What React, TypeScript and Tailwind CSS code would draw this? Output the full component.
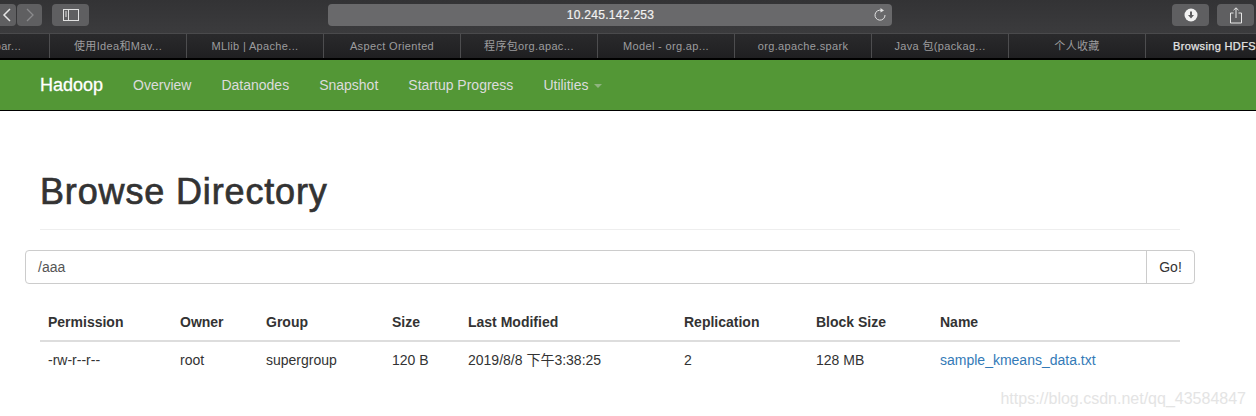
const tabs = [
  "Apache: Spar...",
  "使用Idea和Mav...",
  "MLlib | Apache...",
  "Aspect Oriented",
  "程序包org.apac...",
  "Model - org.ap...",
  "org.apache.spark",
  "Java 包(packag...",
  "个人收藏",
];

const navLinks = ["Overview", "Datanodes", "Snapshot", "Startup Progress"];

const columns = [
  { label: "Permission", value: "-rw-r--r--", width: "w-[132px]" },
  { label: "Owner", value: "root", width: "w-[86px]" },
  { label: "Group", value: "supergroup", width: "w-[126px]" },
  { label: "Size", value: "120 B", width: "w-[76px]" },
  { label: "Last Modified", value: "2019/8/8 下午3:38:25", width: "w-[216px]" },
  { label: "Replication", value: "2", width: "w-[132px]" },
  { label: "Block Size", value: "128 MB", width: "w-[124px]" },
];

function ToolbarButton({ className, children }: { className: string; children?: React.ReactNode }) {
  return (
    <div className={`flex h-[22px] items-center justify-center rounded-[4px] bg-[#5f5f61] ${className}`}>
      {children}
    </div>
  );
}

function BrowserChrome() {
  return (
    <div className="bg-[#2a2a2c]">
      <div className="flex h-[33px] items-start bg-gradient-to-b from-[#333335] to-[#3b3b3d] pt-1">
        <ToolbarButton className="w-4 rounded-l-none">
          <svg width="12" height="16" viewBox="0 0 12 16" fill="none" stroke="#e6e6e6" strokeWidth="1.5">
            <path d="M8 2 L2 8 L8 14" />
          </svg>
        </ToolbarButton>
        <ToolbarButton className="ml-px w-[25px]">
          <svg width="12" height="16" viewBox="0 0 12 16" fill="none" stroke="#8b8b8d" strokeWidth="1.3">
            <path d="M3 2 L9 8 L3 14" />
          </svg>
        </ToolbarButton>
        <ToolbarButton className="ml-[10px] w-[37px]">
          <svg width="16" height="12" viewBox="0 0 16 12" fill="none" stroke="#e2e2e2" strokeWidth="1">
            <rect x="0.5" y="0.5" width="15" height="11" />
            <path d="M5.5 0.5 V11.5" />
            <path d="M2 3 H4 M2 5 H4 M2 7 H4" />
          </svg>
        </ToolbarButton>
        <div className="ml-[239px] flex h-[22px] w-[564px] items-center rounded-[4px] bg-[#69696b] pr-[4px]">
          <span className="flex-1 pl-[20px] text-center text-[12px] tracking-[0.3px] text-[#f2f2f2] [-webkit-text-stroke:0.2px_#f2f2f2]">
            10.245.142.253
          </span>
          <svg width="14" height="14" viewBox="0 0 14 14" fill="none" stroke="#e2e2e2" strokeWidth="1" className="mr-[1px]">
            <path d="M8.5 2.4 A5 5 0 1 0 12 7" />
            <path d="M7.5 0 L11 2.4 L7.5 4.6 Z" fill="#e2e2e2" stroke="none" />
          </svg>
        </div>
        <ToolbarButton className="ml-[280px] w-[37px]">
          <svg width="14" height="14" viewBox="0 0 14 14">
            <circle cx="7" cy="7" r="6.5" fill="#f2f2f2" />
            <path d="M6 3.5 H8 V7 H10 L7 10.5 L4 7 H6 Z" fill="#5f5f61" />
          </svg>
        </ToolbarButton>
        <ToolbarButton className="ml-2 w-[37px]">
          <svg width="12" height="17" viewBox="0 0 12 17" fill="none" stroke="#e6e6e6" strokeWidth="1">
            <path d="M3.5 6 H0.5 V16 H11.5 V6 H8.5" />
            <path d="M6 11 V1 M3.5 3.2 L6 0.8 L8.5 3.2" />
          </svg>
        </ToolbarButton>
      </div>
      <div className="flex h-[25px] items-center overflow-hidden border-t border-[#4a4a4c] bg-gradient-to-b from-[#2a2a2c] to-[#1f1f21]">
        {tabs.map((tab, i) => (
          <div
            key={tab}
            className={`flex h-full w-[137px] shrink-0 items-center justify-center whitespace-nowrap border-r border-[#4d4d4f] text-[11px] tracking-[0.35px] text-[#9c9c9e] ${i === 0 ? "ml-[-87px]" : ""}`}
          >
            {tab}
          </div>
        ))}
        <div className="flex h-full w-[137px] shrink-0 items-center justify-center whitespace-nowrap text-[11px] tracking-[0.35px] text-[#e4e4e4] [-webkit-text-stroke:0.25px_#e4e4e4]">
          Browsing HDFS
        </div>
      </div>
    </div>
  );
}

export default function App() {
  return (
    <div className="relative h-[416px] w-[1256px] overflow-hidden bg-white font-['Liberation_Sans','Noto_Sans_CJK_SC',sans-serif] text-[14px] text-[#333]">
      <BrowserChrome />
      <nav className="flex h-[53px] items-center border-t-2 border-b border-t-black border-b-black bg-[#539736] pl-10">
        <a className="mr-[30px] text-[18px] text-white [-webkit-text-stroke:0.3px_#fff]">Hadoop</a>
        <div className="flex items-center gap-[30px] text-[#dcdcdc]">
          {navLinks.map((link) => (
            <a key={link}>{link}</a>
          ))}
          <a className="flex items-center gap-[5px]">
            Utilities
            <span className="mt-[2px] border-x-4 border-t-4 border-x-transparent border-t-[#8fb37f]" />
          </a>
        </div>
      </nav>

      <div className="pl-10 pr-[76px]">
        <h1 className="mt-[59px] border-b border-[#eee] pb-[15px] text-[36px] leading-[44px] tracking-[0.85px] [-webkit-text-stroke:0.7px_#333]">
          Browse Directory
        </h1>
      </div>

      <div className="ml-[25px] mt-5 flex h-[34px] w-[1170px] rounded-[4px] border border-[#ccc]">
        <div className="flex flex-1 items-center pl-3 text-[#555]">/aaa</div>
        <div className="flex w-[48px] items-center justify-center border-l border-[#ccc]">Go!</div>
      </div>

      <div className="pl-10 pr-[76px] pt-5">
        <table className="w-full table-fixed border-collapse text-left">
          <thead>
            <tr className="h-[37px] border-b-2 border-[#ddd]">
              {columns.map((col) => (
                <th key={col.label} className={`${col.width} pl-2 font-bold`}>
                  {col.label}
                </th>
              ))}
              <th className="pl-2 font-bold">Name</th>
            </tr>
          </thead>
          <tbody>
            <tr className="h-[37px]">
              {columns.map((col) => (
                <td key={col.label} className="pl-2">
                  {col.value}
                </td>
              ))}
              <td className="pl-2 text-[#337ab7]">sample_kmeans_data.txt</td>
            </tr>
          </tbody>
        </table>
      </div>

      <div className="absolute right-[10px] top-[387px] text-[16px] text-[#e4e4e4]">
        https://blog.csdn.net/qq_43584847
      </div>
    </div>
  );
}
